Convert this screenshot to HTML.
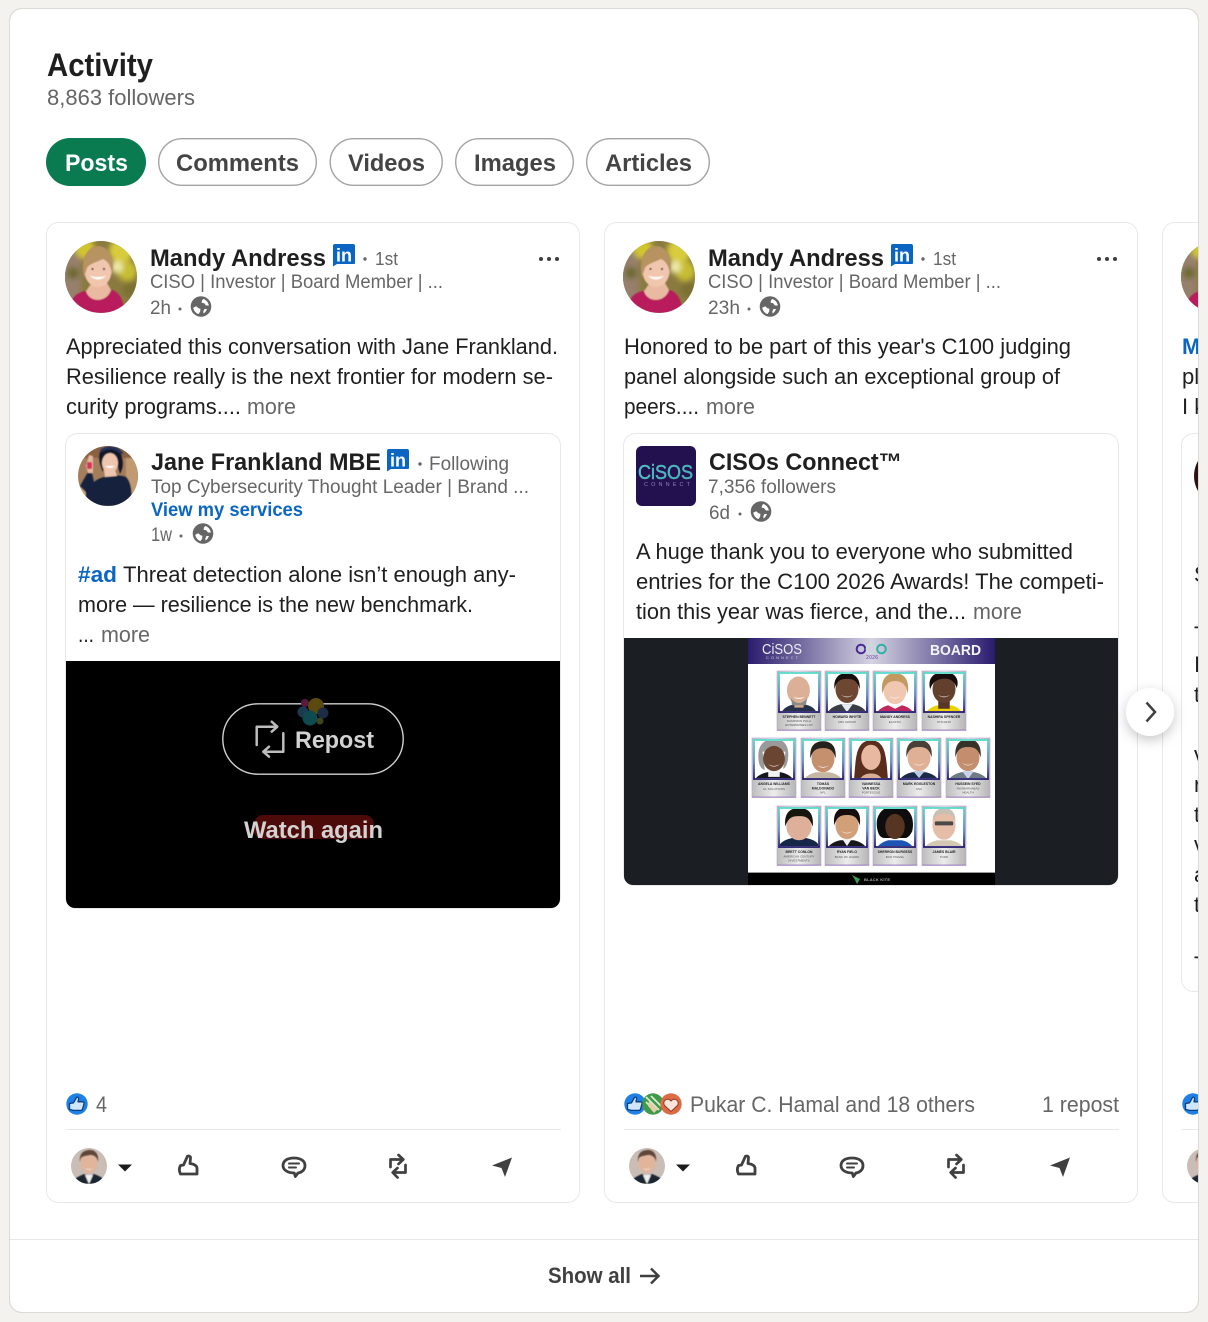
<!DOCTYPE html>
<html><head><meta charset="utf-8"><title>Activity</title>
<style>
html,body{margin:0;padding:0;background:#f4f2ee;width:1208px;height:1322px;overflow:hidden}
svg{display:block}
text{font-family:"Liberation Sans",sans-serif;white-space:pre}
.n{font-size:24px;font-weight:700;fill:#1f1f1f}
.s{font-size:19px;fill:#666}
.b{font-size:22px;fill:#1f1f1f}
.m{font-size:22px;fill:#666}
.p{font-size:24px;font-weight:700;fill:#444}
.c{font-size:3.4px;font-weight:700;fill:#222;text-anchor:middle}
.d{font-size:3px;fill:#555;text-anchor:middle}
</style></head><body>
<svg width="1208" height="1322" viewBox="0 0 1208 1322" xmlns="http://www.w3.org/2000/svg">
<defs>
<filter id="bl"><feGaussianBlur stdDeviation="2.6"/></filter>
<filter id="bs"><feGaussianBlur stdDeviation="0.8"/></filter>
<filter id="bx"><feGaussianBlur stdDeviation="0.45"/></filter>
<filter id="bi"><feGaussianBlur stdDeviation="0.35"/></filter>
<filter id="sh" x="-50%" y="-50%" width="200%" height="200%"><feDropShadow dx="0" dy="4" stdDeviation="6" flood-color="#000" flood-opacity=".22"/></filter>
<clipPath id="cardclip"><rect x="10" y="9" width="1188" height="1303" rx="12"/></clipPath>
<clipPath id="ca"><circle cx="36" cy="36" r="36"/></clipPath>
<clipPath id="cj"><circle cx="30" cy="30" r="30"/></clipPath>
<clipPath id="cm"><circle cx="18" cy="18" r="18"/></clipPath>
<clipPath id="tc"><rect x="3" y="3" width="38" height="37"/></clipPath>
<clipPath id="vid"><path d="M66 661H560V899a9 9 0 0 1-9 9H75a9 9 0 0 1-9-9Z"/></clipPath>
<clipPath id="img"><path d="M624 638H1118V876a9 9 0 0 1-9 9H633a9 9 0 0 1-9-9Z"/></clipPath>
<linearGradient id="hd" x1="0" x2="1" y1="0" y2="0"><stop offset="0" stop-color="#2a1c6e"/><stop offset=".5" stop-color="#d5d3e2"/><stop offset="1" stop-color="#2a1c6e"/></linearGradient>
<linearGradient id="gr" x1="0" x2="1" y1="0" y2="0"><stop offset="0" stop-color="#bdbdbd"/><stop offset=".5" stop-color="#ececec"/><stop offset="1" stop-color="#b5b5b5"/></linearGradient>
<linearGradient id="fr" x1="0" x2="0" y1="0" y2="1"><stop offset="0" stop-color="#58dccb"/><stop offset=".55" stop-color="#5b8fc4"/><stop offset="1" stop-color="#241a6e"/></linearGradient>
<linearGradient id="tl" x1="0" x2="1" y1="0" y2="1"><stop offset="0" stop-color="#4fc6c8"/><stop offset="1" stop-color="#4aa6b0"/></linearGradient>

<g id="mandy">
 <g clip-path="url(#ca)">
  <rect width="72" height="72" fill="#8a7a40"/>
  <g filter="url(#bl)">
   <rect x="-4" y="-4" width="20" height="80" fill="#96806c"/>
   <circle cx="20" cy="8" r="10" fill="#d1c52d"/><circle cx="56" cy="10" r="12" fill="#d8cc3c"/>
   <circle cx="62" cy="30" r="10" fill="#c7bd32"/><circle cx="8" cy="32" r="6" fill="#6c6a2a"/>
   <circle cx="52" cy="26" r="6" fill="#eeeaa8"/><circle cx="66" cy="48" r="8" fill="#7c7030"/>
  </g>
  <g filter="url(#bx)">
  <path d="M4 72C5 58 10 52 20 50L33 54L47 49C53 51 58 56 60 72Z" fill="#b81c5c"/>
  <path d="M21 50C24 62 42 62 46 49L41 40H28Z" fill="#eab9a2"/>
  <ellipse cx="33" cy="30" rx="13.500" ry="16" fill="#f0c7ae"/>
  <path d="M19 36C15 17 23 5 33 5C44 5 50 17 47 34C46 26 44 21 38 18C32 21 24 23 22 27Z" fill="#b69360"/>
  <path d="M25 35q8 7 16 0q-8 2-16 0Z" fill="#fff"/>
  <circle cx="27.500" cy="28" r="1.100" fill="#44352c"/><circle cx="39" cy="28" r="1.100" fill="#44352c"/>
  </g>
 </g>
</g>
<g id="jane">
 <g clip-path="url(#cj)">
  <rect width="60" height="60" fill="#a47e5b"/>
  <g filter="url(#bs)"><rect x="0" y="0" width="60" height="12" fill="#8a6142"/><rect x="48" y="12" width="12" height="48" fill="#c29a72"/><rect x="0" y="40" width="10" height="20" fill="#c8a57b"/></g>
  <g filter="url(#bx)">
  <path d="M2 40L10 26L14 27L16 36C24 29 40 28 48 31C54 37 54 50 53 60H8V46Z" fill="#14203c"/>
  <path d="M22 6C30-1 43 2 44 12C46 19 44 24 42 28L38 14L27 13L25 26C22 20 20 12 22 6Z" fill="#141925"/>
  <ellipse cx="32" cy="17" rx="8" ry="10" fill="#eec5ae"/>
  <path d="M26 24l11 0l2 6l-12 1Z" fill="#eec5ae"/>
  <path d="M27 20q5 4 10 0Z" fill="#fff"/>
  <path d="M8 20L11 9L15 10L15 27L10 27Z" fill="#e6b8a0"/>
  <rect x="9" y="16" width="5" height="7" rx="1.500" fill="#d6305e"/>
  <path d="M23 5C30 0 39 1 44 8" stroke="#23305c" stroke-width="3" fill="none"/>
  </g>
 </g>
</g>
<g id="me">
 <g clip-path="url(#cm)">
  <rect width="36" height="36" fill="#c9bdb6"/>
  <g filter="url(#bx)">
  <path d="M1 36C2 30 9 28 13 26L18 28L23 26C28 28 34 30 35 36Z" fill="#1f2833"/>
  <path d="M14 27L18 36L22 27Z" fill="#eee"/>
  <ellipse cx="18" cy="14.500" rx="8.500" ry="11" fill="#e0b59c"/>
  <path d="M9 14C8 5 13 2 19 2C25 2 28 7 27 14C26 9 23 7 19 7C15 8 12 8 10 10Z" fill="#5f4638"/>
  <path d="M13 20q5 2.500 10 0q-5 3.500-10 0Z" fill="#fff"/>
  </g>
 </g>
</g>
<g id="gl">
 <circle r="10.300" fill="#666"/>
 <path d="M-7.800 1.200L-4.800-.2L-2.500 1.800L-.6 2.200L-.8 5L-2.400 7.500C-5.200 6.800-7.200 4.200-7.800 1.200Z" fill="#fff"/>
 <path d="M2.200-7.500C5.200-6.800 7.300-4 7.900-1L5-1L3-3.400L.6-3.800L1-6Z" fill="#fff"/>
 <path d="M3.600 2.400L6 2.600C5.200 4.600 4 6 2.400 7L2.400 4.600Z" fill="#fff"/>
</g>
<g id="inb">
 <path d="M2 0H20a2 2 0 0 1 2 2V19a1 1 0 0 1-1 1H4L0 22.500V2a2 2 0 0 1 2-2Z" fill="#0a66c2"/>
</g>
<g id="lk">
 <circle r="10.700" fill="#1f80e6"/>
 <path d="M-7.500-.5L-3.500-1.200L-.5-6.500Q1.200-7.500 1.700-5.500L1-2.200L6-2.200Q7.500-1.500 7-.2L5.500 5.200Q5 6.400 3.500 6.400H-3.500L-7.500 5.400Z" fill="#cfe6fb" stroke="#0d3f7d" stroke-width="1.300" stroke-linejoin="round"/>
</g>
<g id="actions" fill="none" stroke="#404040" stroke-width="2.800" stroke-linejoin="round" stroke-linecap="round">
 <path d="M180.500 1174C179 1171 179 1168 180.500 1165.500L183.500 1165L187.500 1156.200Q190.500 1155.600 190.500 1158L190 1163.500Q196.500 1164.500 197 1168V1174Z"/>
 <path d="M294 1158c7 0 11 3.200 11 7.500s-3.200 7-7 7.500l-2.700 3.500-1-3.500c-6.800-.2-11.300-3-11.300-7.500s4-7.500 11-7.500Z"/>
 <path d="M289 1163.500h10M289 1167.500h7" stroke-width="2"/>
 <path d="M390.500 1167V1159.500H403M398.500 1155l4.800 4.500l-4.800 4.500M405.500 1165v7.500H393M397.500 1177.500l-4.800-5l4.800-4.500" stroke-width="2.700"/>
 <path d="M492 1165.500L512 1157.500L505 1177L501.500 1168Z" fill="#404040" stroke="none"/>
 <path d="M118 1164.500H132L125 1171.500Z" fill="#1b1b1b" stroke="none"/>
</g>
<g id="tf">
 <rect width="44" height="59.500" fill="url(#gr)" stroke="#b89ed2" stroke-width=".6"/>
 <rect x="2" y="2" width="40" height="39" fill="#fff" stroke="url(#fr)" stroke-width="1.800"/>
 <rect y="58.600" width="44" height=".9" fill="#9b7fc0"/>
</g>
</defs>

<rect width="1208" height="1322" fill="#f4f2ee"/>
<rect x="9.500" y="8.500" width="1189" height="1304" rx="12.500" fill="#fff" stroke="#dcdad6"/>

<g clip-path="url(#cardclip)">
<text x="47" y="76" font-size="32" font-weight="700" fill="#1f1f1f" textLength="106" lengthAdjust="spacingAndGlyphs">Activity</text>
<text x="47" y="105" font-size="22" fill="#666" textLength="148" lengthAdjust="spacingAndGlyphs">8,863 followers</text>

<rect x="46" y="138" width="100" height="48" rx="24" fill="#0a7a50"/>
<text x="65" y="171" class="p" style="fill:#fff" textLength="63" lengthAdjust="spacingAndGlyphs">Posts</text>
<g fill="#fff" stroke="#a3a3a3" stroke-width="1.400">
<rect x="158.700" y="138.700" width="157.600" height="46.600" rx="23.300"/>
<rect x="330.200" y="138.700" width="112" height="46.600" rx="23.300"/>
<rect x="455.700" y="138.700" width="117.600" height="46.600" rx="23.300"/>
<rect x="586.700" y="138.700" width="122.600" height="46.600" rx="23.300"/>
</g>
<text x="176" y="171" class="p" textLength="123" lengthAdjust="spacingAndGlyphs">Comments</text>
<text x="348" y="171" class="p" textLength="77" lengthAdjust="spacingAndGlyphs">Videos</text>
<text x="474" y="171" class="p" textLength="82" lengthAdjust="spacingAndGlyphs">Images</text>
<text x="605" y="171" class="p" textLength="87" lengthAdjust="spacingAndGlyphs">Articles</text>

<!-- cards -->
<g fill="#fff" stroke="#e8e8e8" stroke-width="1">
<rect x="46.500" y="222.500" width="533" height="980" rx="12"/>
<rect x="604.500" y="222.500" width="533" height="980" rx="12"/>
<rect x="1162.500" y="222.500" width="533" height="980" rx="12"/>
</g>

<!-- CARD 1 -->
<use href="#mandy" x="65" y="241"/>
<text x="150" y="266" class="n" textLength="176" lengthAdjust="spacingAndGlyphs">Mandy Andress</text>
<use href="#inb" x="333" y="244"/>
<text x="344" y="261.500" font-size="18" font-weight="700" fill="#fff" text-anchor="middle">in</text>
<circle cx="365" cy="259" r="1.700" fill="#666"/>
<text x="375" y="265" font-size="18" fill="#666" textLength="23" lengthAdjust="spacingAndGlyphs">1st</text>
<g fill="#404040"><circle cx="541" cy="259" r="2"/><circle cx="549" cy="259" r="2"/><circle cx="557" cy="259" r="2"/></g>
<text x="150" y="288" class="s" textLength="293" lengthAdjust="spacingAndGlyphs">CISO | Investor | Board Member | ...</text>
<text x="150" y="314" class="s" textLength="21" lengthAdjust="spacingAndGlyphs">2h</text>
<circle cx="180" cy="309" r="1.500" fill="#666"/>
<use href="#gl" x="201" y="306.500"/>
<text x="66" y="354" class="b" textLength="492" lengthAdjust="spacingAndGlyphs">Appreciated this conversation with Jane Frankland.</text>
<text x="66" y="384" class="b" textLength="487" lengthAdjust="spacingAndGlyphs">Resilience really is the next frontier for modern se-</text>
<text x="66" y="414" class="b" textLength="175" lengthAdjust="spacingAndGlyphs">curity programs....</text>
<text x="247" y="414" class="m" textLength="49" lengthAdjust="spacingAndGlyphs">more</text>

<rect x="65.500" y="433.500" width="495" height="475" rx="12" fill="#fff" stroke="#e8e8e8"/>
<use href="#jane" x="78" y="446"/>
<text x="151" y="470" class="n" textLength="230" lengthAdjust="spacingAndGlyphs">Jane Frankland MBE</text>
<use href="#inb" x="387" y="449"/>
<text x="398" y="466.500" font-size="18" font-weight="700" fill="#fff" text-anchor="middle">in</text>
<circle cx="420" cy="464" r="1.700" fill="#666"/>
<text x="429" y="470" class="s" textLength="80" lengthAdjust="spacingAndGlyphs">Following</text>
<text x="151" y="493" class="s" textLength="378" lengthAdjust="spacingAndGlyphs">Top Cybersecurity Thought Leader | Brand ...</text>
<text x="151" y="516" font-size="19" font-weight="700" fill="#0a66c2" textLength="152" lengthAdjust="spacingAndGlyphs">View my services</text>
<text x="151" y="541" class="s" textLength="21" lengthAdjust="spacingAndGlyphs">1w</text>
<circle cx="181" cy="536" r="1.500" fill="#666"/>
<use href="#gl" x="203" y="533.500"/>
<text x="78" y="582" class="b" font-weight="700" style="fill:#0a66c2" textLength="39" lengthAdjust="spacingAndGlyphs">#ad</text>
<text x="123" y="582" class="b" textLength="393" lengthAdjust="spacingAndGlyphs">Threat detection alone isn’t enough any-</text>
<text x="78" y="612" class="b" textLength="395" lengthAdjust="spacingAndGlyphs">more — resilience is the new benchmark.</text>
<text x="78" y="642" class="b" textLength="16" lengthAdjust="spacingAndGlyphs">...</text>
<text x="101" y="642" class="m" textLength="49" lengthAdjust="spacingAndGlyphs">more</text>

<g clip-path="url(#vid)">
 <rect x="66" y="661" width="494" height="247" fill="#000"/>
 <rect x="222.800" y="703.800" width="180.400" height="70.400" rx="35.200" fill="none" stroke="#cfcfcf" stroke-width="1.400"/>
 <path d="M256.700 745V726.700H277M271.700 721.700l5.600 5l-5.600 5M283.300 733.300V751.700H263.300M269 746.700l-5.700 5l5.700 5" fill="none" stroke="#bdbdbd" stroke-width="2.500" stroke-linejoin="round" stroke-linecap="round"/>
 <text x="295" y="748" class="p" style="fill:#d2d2d2" textLength="79" lengthAdjust="spacingAndGlyphs">Repost</text>
 <circle cx="305" cy="703" r="4" fill="#5a1a3c"/><circle cx="316" cy="706" r="8" fill="#5a4a10"/>
 <circle cx="303" cy="712" r="5.500" fill="#1c3a52"/><circle cx="323" cy="713" r="5.500" fill="#1c2c44"/>
 <circle cx="310" cy="718" r="7.500" fill="#0f4a50"/><circle cx="320" cy="721" r="3.500" fill="#3c4420"/>
 <rect x="254" y="815" width="120" height="24" rx="9" fill="#4c0a08"/>
 <text x="244" y="838" class="p" style="fill:#d2d2d2" textLength="139" lengthAdjust="spacingAndGlyphs">Watch again</text>
</g>

<use href="#lk" x="77" y="1104"/>
<text x="96" y="1112" class="m" textLength="11" lengthAdjust="spacingAndGlyphs">4</text>
<rect x="66" y="1129" width="495" height="1" fill="#e8e8e8"/>
<use href="#me" x="71" y="1148"/>
<use href="#actions"/>

<!-- CARD 2 -->
<use href="#mandy" x="623" y="241"/>
<text x="708" y="266" class="n" textLength="176" lengthAdjust="spacingAndGlyphs">Mandy Andress</text>
<use href="#inb" x="891" y="244"/>
<text x="902" y="261.500" font-size="18" font-weight="700" fill="#fff" text-anchor="middle">in</text>
<circle cx="923" cy="259" r="1.700" fill="#666"/>
<text x="933" y="265" font-size="18" fill="#666" textLength="23" lengthAdjust="spacingAndGlyphs">1st</text>
<g fill="#404040"><circle cx="1099" cy="259" r="2"/><circle cx="1107" cy="259" r="2"/><circle cx="1115" cy="259" r="2"/></g>
<text x="708" y="288" class="s" textLength="293" lengthAdjust="spacingAndGlyphs">CISO | Investor | Board Member | ...</text>
<text x="708" y="314" class="s" textLength="32" lengthAdjust="spacingAndGlyphs">23h</text>
<circle cx="749" cy="309" r="1.500" fill="#666"/>
<use href="#gl" x="770" y="306.500"/>
<text x="624" y="354" class="b" textLength="447" lengthAdjust="spacingAndGlyphs">Honored to be part of this year's C100 judging</text>
<text x="624" y="384" class="b" textLength="436" lengthAdjust="spacingAndGlyphs">panel alongside such an exceptional group of</text>
<text x="624" y="414" class="b" textLength="75" lengthAdjust="spacingAndGlyphs">peers....</text>
<text x="706" y="414" class="m" textLength="49" lengthAdjust="spacingAndGlyphs">more</text>

<rect x="623.500" y="433.500" width="495" height="452" rx="12" fill="#fff" stroke="#e8e8e8"/>
<rect x="636" y="446" width="60" height="60" rx="6" fill="#23104f"/>
<text x="638" y="479" font-size="20" fill="url(#tl)" stroke="#4cb6bc" stroke-width=".5" textLength="55" lengthAdjust="spacingAndGlyphs">CiSOS</text>
<text x="644" y="486" font-size="5.500" fill="#8d80bd" textLength="46">CONNECT</text>
<text x="709" y="470" class="n" textLength="193" lengthAdjust="spacingAndGlyphs">CISOs Connect™</text>
<text x="708" y="493" class="s" textLength="128" lengthAdjust="spacingAndGlyphs">7,356 followers</text>
<text x="709" y="519" class="s" textLength="21" lengthAdjust="spacingAndGlyphs">6d</text>
<circle cx="740" cy="514" r="1.500" fill="#666"/>
<use href="#gl" x="761" y="511.500"/>
<text x="636" y="559" class="b" textLength="437" lengthAdjust="spacingAndGlyphs">A huge thank you to everyone who submitted</text>
<text x="636" y="589" class="b" textLength="468" lengthAdjust="spacingAndGlyphs">entries for the C100 2026 Awards! The competi-</text>
<text x="636" y="619" class="b" textLength="330" lengthAdjust="spacingAndGlyphs">tion this year was fierce, and the...</text>
<text x="973" y="619" class="m" textLength="49" lengthAdjust="spacingAndGlyphs">more</text>

<g clip-path="url(#img)">
 <rect x="624" y="638" width="494" height="247" fill="#1b1f23"/>
 <rect x="748" y="638" width="247" height="247" fill="#fff"/>
 <g filter="url(#bi)">
 <rect x="748" y="638" width="247" height="26" fill="url(#hd)"/>
 <text x="762" y="654" font-size="15" fill="#f0eff6" textLength="40" lengthAdjust="spacingAndGlyphs">CiSOS</text>
 <text x="766" y="659" font-size="4" fill="#cfcbe2" textLength="32">CONNECT</text>
 <circle cx="861" cy="649" r="4.300" fill="none" stroke="#4b2a92" stroke-width="2"/>
 <circle cx="871" cy="649" r="4.300" fill="none" stroke="#c6dcd8" stroke-width="2"/>
 <circle cx="881.500" cy="649" r="4.300" fill="none" stroke="#2db1a6" stroke-width="2"/>
 <text x="866" y="659" font-size="5" fill="#5b3ea0" textLength="12">2026</text>
 <text x="930" y="655" font-size="14.500" font-weight="700" fill="#f4f3f8" textLength="51" lengthAdjust="spacingAndGlyphs">BOARD</text>
 <rect x="748" y="872" width="247" height="13" fill="#000"/>
 <rect x="748" y="872" width="247" height="1" fill="#999"/>
 <path d="M852 875L860 879L857 884L855 880Z" fill="#3e9a5c"/>
 <text x="864" y="881" font-size="4" font-weight="700" fill="#aaa" textLength="26">BLACK KITE</text>

 <!-- row 1 -->
 <g transform="translate(777,671)"><use href="#tf"/><g clip-path="url(#tc)"><g transform="translate(-3.300,-2.500) scale(1.150)"><path d="M6 41C7 34 14 32 18 31H26C31 32 37 34 38 41Z" fill="#26324a"/><rect x="18" y="25" width="8" height="9" fill="#d2a78c"/><ellipse cx="21.500" cy="19" rx="10" ry="12" fill="#dcb097"/><path d="M15 26q7 8 14 0l-1 6h-12Z" fill="#8b8b85"/><path d="M17 25q5 3 10 0q-5 1-10 0Z" fill="#fff"/></g></g><text x="22" y="47" class="c">STEPHEN BENNETT</text><text x="22" y="51" class="d">DOMINION PILLA</text><text x="22" y="55" class="d">ENTERPRISES LTD</text></g>
 <g transform="translate(825,671)"><use href="#tf"/><g clip-path="url(#tc)"><g transform="translate(-3.300,-2.500) scale(1.150)"><path d="M4 41C6 34 13 32 17 31H27C32 32 38 34 40 41Z" fill="#3a3d45"/><path d="M17 31L22 38L27 31Z" fill="#e7eef2"/><ellipse cx="22" cy="18" rx="10" ry="12" fill="#6d4633"/><path d="M11 18C10 7 16 4 22 4C28 4 34 8 33 18C31 11 28 9 22 9C16 9 13 11 11 18Z" fill="#14100e"/><path d="M17 23q5 3 10 0q-5 4-10 0Z" fill="#fff"/></g></g><text x="22" y="47" class="c">HOWARD WHYTE</text><text x="22" y="52" class="d">CRC GROUP</text></g>
 <g transform="translate(873,671)"><use href="#tf"/><g clip-path="url(#tc)"><g transform="translate(-3.300,-2.500) scale(1.150)"><path d="M5 41C7 35 13 33 16 32L22 35L28 32C32 33 37 35 39 41Z" fill="#c22860"/><ellipse cx="22" cy="19" rx="10" ry="12" fill="#f0c8b2"/><path d="M11 22C9 9 15 4 22 4C30 4 35 10 33 22C32 14 28 11 22 11C16 11 13 14 11 22Z" fill="#c29a60"/><path d="M17 24q5 3 10 0q-5 4-10 0Z" fill="#fff"/></g></g><text x="22" y="47" class="c">MANDY ANDRESS</text><text x="22" y="52" class="d">ELASTIC</text></g>
 <g transform="translate(922,671)"><use href="#tf"/><g clip-path="url(#tc)"><g transform="translate(-3.300,-2.500) scale(1.150)"><path d="M5 41C7 35 13 33 16 32L22 34L28 32C32 33 37 35 39 41Z" fill="#ecd100"/><rect x="17" y="26" width="10" height="9" fill="#5a3626"/><ellipse cx="22" cy="18" rx="10" ry="12" fill="#64402f"/><path d="M10 18C7 7 15 3 22 3C31 3 36 9 33 17C31 10 26 8 20 9C15 10 12 12 10 18Z" fill="#12100e"/><path d="M17 23q5 3 10 0q-5 4-10 0Z" fill="#fff"/></g></g><text x="22" y="47" class="c">NASHIRA SPENCER</text><text x="22" y="52" class="d">STICHFIO</text></g>

 <!-- row 2 -->
 <g transform="translate(752,738)"><use href="#tf"/><g clip-path="url(#tc)"><g transform="translate(-3.300,-2.500) scale(1.150)"><path d="M4 41C6 35 12 33 16 32H28C32 33 38 35 40 41Z" fill="#14141c"/><path d="M17 30H27V36H17Z" fill="#f2f2f2"/><path d="M9 24C6 8 14 3 22 3C31 3 36 9 34 22C33 26 32 28 30 29L32 14L12 14L14 30C11 29 10 27 9 24Z" fill="#9a9a9a"/><ellipse cx="22" cy="20" rx="9.500" ry="11" fill="#6a4432"/><path d="M17 25q5 3 10 0q-5 4-10 0Z" fill="#fff"/></g></g><text x="22" y="47" class="c">ANGELA WILLIAMS</text><text x="22" y="52" class="d">UL SOLUTIONS</text></g>
 <g transform="translate(801,738)"><use href="#tf"/><g clip-path="url(#tc)"><g transform="translate(-3.300,-2.500) scale(1.150)"><path d="M4 41C6 35 12 33 16 32H28C32 33 38 35 40 41Z" fill="#c6b7a2"/><ellipse cx="22" cy="20" rx="10" ry="12" fill="#c4906e"/><path d="M11 20C10 8 16 5 22 5C28 5 34 8 33 20C31 13 28 11 22 11C16 11 13 13 11 20Z" fill="#26201c"/><path d="M17 26q5 3 10 0q-5 4-10 0Z" fill="#fff"/></g></g><text x="22" y="47" class="c">TOMÁS</text><text x="22" y="51.500" class="c">MALDONADO</text><text x="22" y="55.500" class="d">NFL</text></g>
 <g transform="translate(849,738)"><use href="#tf"/><g clip-path="url(#tc)"><g transform="translate(-3.300,-2.500) scale(1.150)"><path d="M7 41C9 20 8 5 22 4C36 5 35 20 37 41Z" fill="#5a2e1e"/><path d="M11 41C13 35 17 33 22 33C27 33 31 35 33 41Z" fill="#d8ac95"/><ellipse cx="22" cy="19" rx="8.500" ry="11" fill="#e8b9a0"/><path d="M18 24q4 3 8 0q-4 3-8 0Z" fill="#fff"/></g></g><text x="22" y="47" class="c">VANNESSA</text><text x="22" y="51.500" class="c">VAN BECK</text><text x="22" y="55.500" class="d">FORTESCUE</text></g>
 <g transform="translate(897,738)"><use href="#tf"/><g clip-path="url(#tc)"><g transform="translate(-3.300,-2.500) scale(1.150)"><path d="M4 41C6 35 12 33 16 32H28C32 33 38 35 40 41Z" fill="#1c2a48"/><path d="M17 31L22 37L27 31Z" fill="#b4cbe0"/><ellipse cx="22" cy="19" rx="10" ry="12" fill="#e0b096"/><path d="M11 19C10 7 16 4 22 4C29 4 34 8 33 19C31 12 28 10 22 10C16 10 13 12 11 19Z" fill="#4a4038"/><path d="M17 24q5 3 10 0q-5 4-10 0Z" fill="#fff"/></g></g><text x="22" y="47" class="c">MARK EGGLESTON</text><text x="22" y="52" class="d">CSC</text></g>
 <g transform="translate(946,738)"><use href="#tf"/><g clip-path="url(#tc)"><g transform="translate(-3.300,-2.500) scale(1.150)"><path d="M4 41C6 35 12 33 16 32H28C32 33 38 35 40 41Z" fill="#6e7a84"/><path d="M17 31L22 38L27 31Z" fill="#cad2ea"/><ellipse cx="22" cy="19" rx="10" ry="12" fill="#c48e6e"/><path d="M11 19C10 7 16 3 22 3C29 3 34 8 33 19C31 12 28 10 22 10C16 10 13 12 11 19Z" fill="#36302c"/><path d="M17 24q5 3 10 0q-5 4-10 0Z" fill="#fff"/></g></g><text x="22" y="47" class="c">HUSSEIN SYED</text><text x="22" y="51.500" class="d">RWJBARNABAS</text><text x="22" y="55.500" class="d">HEALTH</text></g>

 <!-- row 3 -->
 <g transform="translate(777,806)"><use href="#tf"/><g clip-path="url(#tc)"><g transform="translate(-3.300,-2.500) scale(1.150)"><path d="M3 41C4 33 12 31 16 30H28C33 31 40 33 41 41Z" fill="#162746"/><ellipse cx="22" cy="20" rx="11" ry="12" fill="#deb09a"/><path d="M10 20C9 7 15 4 22 4C30 4 35 8 34 20C31 12 28 11 22 11C16 11 13 12 10 20Z" fill="#16120f"/></g></g><text x="22" y="47" class="c">BRETT CONLON</text><text x="22" y="51.500" class="d">AMERICAN CENTURY</text><text x="22" y="55.500" class="d">INVESTMENTS</text></g>
 <g transform="translate(825,806)"><use href="#tf"/><g clip-path="url(#tc)"><g transform="translate(-3.300,-2.500) scale(1.150)"><path d="M4 41C6 35 12 33 16 32H28C32 33 38 35 40 41Z" fill="#13161e"/><path d="M18 31L22 37L26 31Z" fill="#f2f2f2"/><ellipse cx="22" cy="19" rx="10" ry="12" fill="#d2a078"/><path d="M11 19C9 7 16 3 22 3C29 3 35 7 33 19C31 12 28 10 22 10C16 10 13 12 11 19Z" fill="#14110f"/><path d="M17 24q5 3 10 0q-5 4-10 0Z" fill="#fff"/></g></g><text x="22" y="47" class="c">RYAN FIELO</text><text x="22" y="52" class="d">BANK OF HAWAII</text></g>
 <g transform="translate(873,806)"><use href="#tf"/><g clip-path="url(#tc)"><g transform="translate(-3.300,-2.500) scale(1.150)"><path d="M5 41C7 35 13 33 16 32H28C32 33 37 35 39 41Z" fill="#1f55b4"/><path d="M7 24C3 9 13 2 22 2C32 2 40 9 37 24C35 28 33 30 31 30L13 30C10 30 8 28 7 24Z" fill="#0d0b0a"/><ellipse cx="22" cy="20" rx="8.500" ry="11" fill="#573524"/><path d="M18 25q4 3 8 0q-4 3-8 0Z" fill="#fff"/></g></g><text x="22" y="47" class="c">SHERRON BURGESS</text><text x="22" y="52" class="d">BCD TRAVEL</text></g>
 <g transform="translate(922,806)"><use href="#tf"/><g clip-path="url(#tc)"><g transform="translate(-3.300,-2.500) scale(1.150)"><path d="M4 41C6 35 12 33 16 32H28C32 33 38 35 40 41Z" fill="#d4c8b4"/><ellipse cx="22" cy="19" rx="10" ry="12.500" fill="#e6bea8"/><path d="M12 16C12 7 17 4 22 4C28 4 32 7 32 16C30 11 28 9 22 9C16 9 14 11 12 16Z" fill="#c9c0b4"/><rect x="14" y="15.500" width="16" height="3.500" rx="1" fill="#4c4a48"/></g></g><text x="22" y="47" class="c">JAMES BLAIR</text><text x="22" y="52" class="d">TODD</text></g>
 </g>
</g>

<use href="#lk" x="635" y="1104"/>
<circle cx="653" cy="1104" r="10.700" fill="#3f9a4c"/>
<path d="M646 1097L659 1110M651 1096L661 1106M646 1102L655 1111" stroke="#d9eecb" stroke-width="1.800"/>
<path d="M649 1101L658 1109L654 1113L648 1106Z" fill="#e2cfa9"/>
<circle cx="671" cy="1104" r="10.700" fill="#dc6a45"/>
<path d="M671 1111.500L664.500 1105.500C661.800 1101 667.500 1096.800 671 1101C674.500 1096.800 680.200 1101 677.500 1105.500Z" fill="#fbe3d9" stroke="#8f3b22" stroke-width="1"/>
<text x="690" y="1112" class="m" textLength="285" lengthAdjust="spacingAndGlyphs">Pukar C. Hamal and 18 others</text>
<text x="1042" y="1112" class="m" textLength="77" lengthAdjust="spacingAndGlyphs">1 repost</text>
<rect x="624" y="1129" width="495" height="1" fill="#e8e8e8"/>
<use href="#me" x="629" y="1148"/>
<use href="#actions" x="558"/>

<!-- CARD 3 -->
<use href="#mandy" x="1181" y="241"/>
<text x="1182" y="354" class="b" font-weight="700" style="fill:#0a66c2">M</text>
<text x="1182" y="384" class="b">pl</text>
<text x="1182" y="414" class="b">I k</text>
<rect x="1181.500" y="433.500" width="495" height="558" rx="12" fill="#fff" stroke="#e8e8e8"/>
<circle cx="1224" cy="476" r="30" fill="#2a1410"/>
<text x="1194" y="582" class="b">S</text><text x="1194" y="642" class="b">T</text><text x="1194" y="672" class="b">I</text><text x="1194" y="702" class="b">t</text><text x="1194" y="762" class="b">v</text><text x="1194" y="792" class="b">r</text><text x="1194" y="822" class="b">t</text><text x="1194" y="852" class="b">v</text><text x="1194" y="882" class="b">a</text><text x="1194" y="912" class="b">t</text><text x="1194" y="972" class="b">T</text>
<use href="#lk" x="1193" y="1104"/>
<rect x="1182" y="1129" width="30" height="1" fill="#e8e8e8"/>
<use href="#me" x="1187" y="1148"/>

<!-- next button -->
<circle cx="1150" cy="712" r="24" fill="#fff" filter="url(#sh)"/>
<path d="M1146.500 702.500L1155 712L1146.500 721.500" fill="none" stroke="#404040" stroke-width="2.500"/>

<!-- footer -->
<rect x="10" y="1239" width="1188" height="1" fill="#e8e8e8"/>
<text x="548" y="1283" font-size="22" font-weight="700" fill="#404040" textLength="83" lengthAdjust="spacingAndGlyphs">Show all</text>
<path d="M640 1276H658M651 1268.500L658.500 1276L651 1283.500" fill="none" stroke="#404040" stroke-width="2.500"/>
</g>
<rect x="1199" y="8" width="10" height="1314" fill="#f4f2ee"/>
<rect x="9.500" y="8.500" width="1189" height="1304" rx="12.500" fill="none" stroke="#dcdad6"/>
</svg>
</body></html>
